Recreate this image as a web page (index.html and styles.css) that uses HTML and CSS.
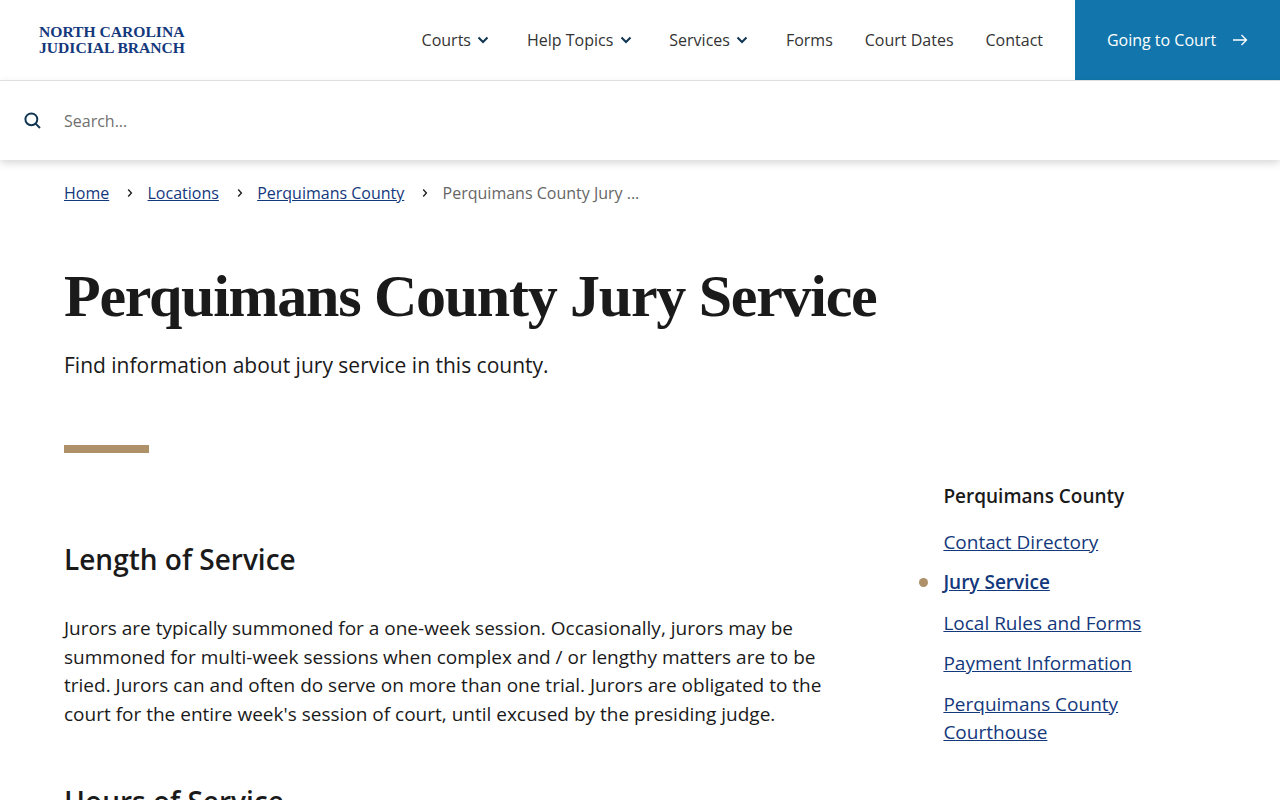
FILE: index.html
```html
<!DOCTYPE html>
<html lang="en">
<head>
<meta charset="utf-8">
<title>Perquimans County Jury Service</title>
<link rel="stylesheet" href="styles.css">
</head>
<body>
<header class="site-header">
  <a class="logo" href="#"><span>North Carolina</span><span>Judicial Branch</span></a>
  <nav class="main-nav">
    <a href="#" class="nav-item">Courts<svg class="chev" viewBox="0 0 12 8"><path d="M1.5 1.5 6 6l4.5-4.5"/></svg></a>
    <a href="#" class="nav-item">Help Topics<svg class="chev" viewBox="0 0 12 8"><path d="M1.5 1.5 6 6l4.5-4.5"/></svg></a>
    <a href="#" class="nav-item">Services<svg class="chev" viewBox="0 0 12 8"><path d="M1.5 1.5 6 6l4.5-4.5"/></svg></a>
    <a href="#" class="nav-item">Forms</a>
    <a href="#" class="nav-item">Court Dates</a>
    <a href="#" class="nav-item">Contact</a>
  </nav>
  <a href="#" class="cta">Going to Court<svg class="arrow" viewBox="0 0 16 12"><path d="M1 6h13.5M9.5 1l5 5-5 5"/></svg></a>
</header>
<div class="search-bar">
  <svg class="search-icon" viewBox="0 0 18 18"><circle cx="7.8" cy="7.8" r="6.3"/><path d="m12.3 12.3 4.6 4.6"/></svg>
  <span class="search-text">Search...</span>
</div>
<main class="page">
  <ol class="crumbs">
    <li><a href="#">Home</a></li>
    <li class="sep"><svg viewBox="0 0 6 10"><path d="m1.2 1.5 3.2 3.5-3.2 3.5"/></svg></li>
    <li><a href="#">Locations</a></li>
    <li class="sep"><svg viewBox="0 0 6 10"><path d="m1.2 1.5 3.2 3.5-3.2 3.5"/></svg></li>
    <li><a href="#">Perquimans County</a></li>
    <li class="sep"><svg viewBox="0 0 6 10"><path d="m1.2 1.5 3.2 3.5-3.2 3.5"/></svg></li>
    <li class="current">Perquimans County Jury ...</li>
  </ol>
  <h1 class="title">Perquimans County Jury Service</h1>
  <p class="lede">Find information about jury service in this county.</p>
  <div class="rule"></div>
  <div class="columns">
    <article class="content">
      <h2>Length of Service</h2>
      <p>Jurors are typically summoned for a one-week session. Occasionally, jurors may be summoned for multi-week sessions when complex and / or lengthy matters are to be tried. Jurors can and often do serve on more than one trial. Jurors are obligated to the court for the entire week's session of court, until excused by the presiding judge.</p>
      <h2>Hours of Service</h2>
    </article>
    <aside class="side">
      <h3>Perquimans County</h3>
      <ul>
        <li><a href="#">Contact Directory</a></li>
        <li class="active"><a href="#">Jury Service</a></li>
        <li><a href="#">Local Rules and Forms</a></li>
        <li><a href="#">Payment Information</a></li>
        <li><a href="#">Perquimans County Courthouse</a></li>
      </ul>
    </aside>
  </div>
</main>
</body>
</html>
```
FILE: styles.css
```css
* { box-sizing: border-box; }
html, body { margin: 0; height: 800px; overflow: hidden; }
body { font-family: "Open Sans", sans-serif; color: #1a1a1a; background: #fff; }
.site-header { display: flex; align-items: stretch; height: 81px; border-bottom: 1px solid #e6e6e6; padding-left: 39px; background: #fff; }
.logo { display: flex; flex-direction: column; justify-content: center; width: 200px; padding-bottom: 1px; font-family: "Liberation Serif", serif; font-weight: 700; font-size: 15.6px; line-height: 16px; color: #14387c; text-transform: uppercase; text-decoration: none; white-space: nowrap; }
.main-nav { display: flex; align-items: center; gap: 32px; margin-left: auto; padding-right: 32px; height: 80px; }
.nav-item { display: flex; align-items: center; font-size: 16px; color: #333; text-decoration: none; }
.chev { width: 12px; height: 8px; margin-left: 6.5px; margin-right: 5.5px; fill: none; stroke: #0f3552; stroke-width: 2; }
.cta { display: flex; align-items: center; justify-content: center; gap: 16px; width: 205px; height: 80px; background: #1275ab; color: #fff; font-size: 16px; text-decoration: none; }
.arrow { width: 16px; height: 12px; fill: none; stroke: #fff; stroke-width: 1.3; }
.search-bar { display: flex; align-items: center; height: 79px; padding-left: 23.5px; box-shadow: 0 3px 8px rgba(0,0,0,.16); position: relative; background: #fff; }
.search-icon { width: 17px; height: 17px; fill: none; stroke: #0f3552; stroke-width: 2.1; }
.search-text { margin-left: 23.5px; font-size: 16px; color: #707070; }
.page { padding: 0 64px; }
.crumbs { display: flex; align-items: center; list-style: none; margin: 0; padding: 20px 0 0; height: 46px; font-size: 16px; }
.crumbs a { color: #14387c; }
.crumbs .sep { width: 38.3px; padding-left: 4px; display: flex; justify-content: center; }
.crumbs .sep svg { width: 6px; height: 10px; fill: none; stroke: #222; stroke-width: 1.4; }
.current { color: #666; }
.title { margin: 54px 0 0; font-family: "Liberation Serif", serif; font-weight: 700; font-size: 60px; line-height: 72px; letter-spacing: -1.27px; color: #1a1a1a; }
.lede { margin: 17px 0 0; font-size: 21px; line-height: 32px; }
.rule { width: 85px; height: 8px; margin-top: 64px; background: #ae9169; }
.columns { display: flex; }
.content { width: 762px; padding-top: 87px; }
.content h2 { margin: 0; font-size: 28px; line-height: 38px; font-weight: 600; }
.content p { margin: 36px 0 0; font-size: 19px; line-height: 28.6px; }
.content p + h2 { margin-top: 54px; }
.side { margin-left: 117.4px; padding-top: 29px; width: 240px; }
.side h3 { margin: 0; font-size: 19px; line-height: 28px; font-weight: 600; }
.side ul { list-style: none; margin: 17.6px 0 0; padding: 0; font-size: 19px; line-height: 28.5px; }
.side li { margin-bottom: 12px; position: relative; }
.side a { color: #14387c; }
.side .active a { font-weight: 600; }
.side .active::before { content: ""; position: absolute; left: -24.5px; top: 10px; width: 9px; height: 9px; border-radius: 50%; background: #ae9169; }
```
